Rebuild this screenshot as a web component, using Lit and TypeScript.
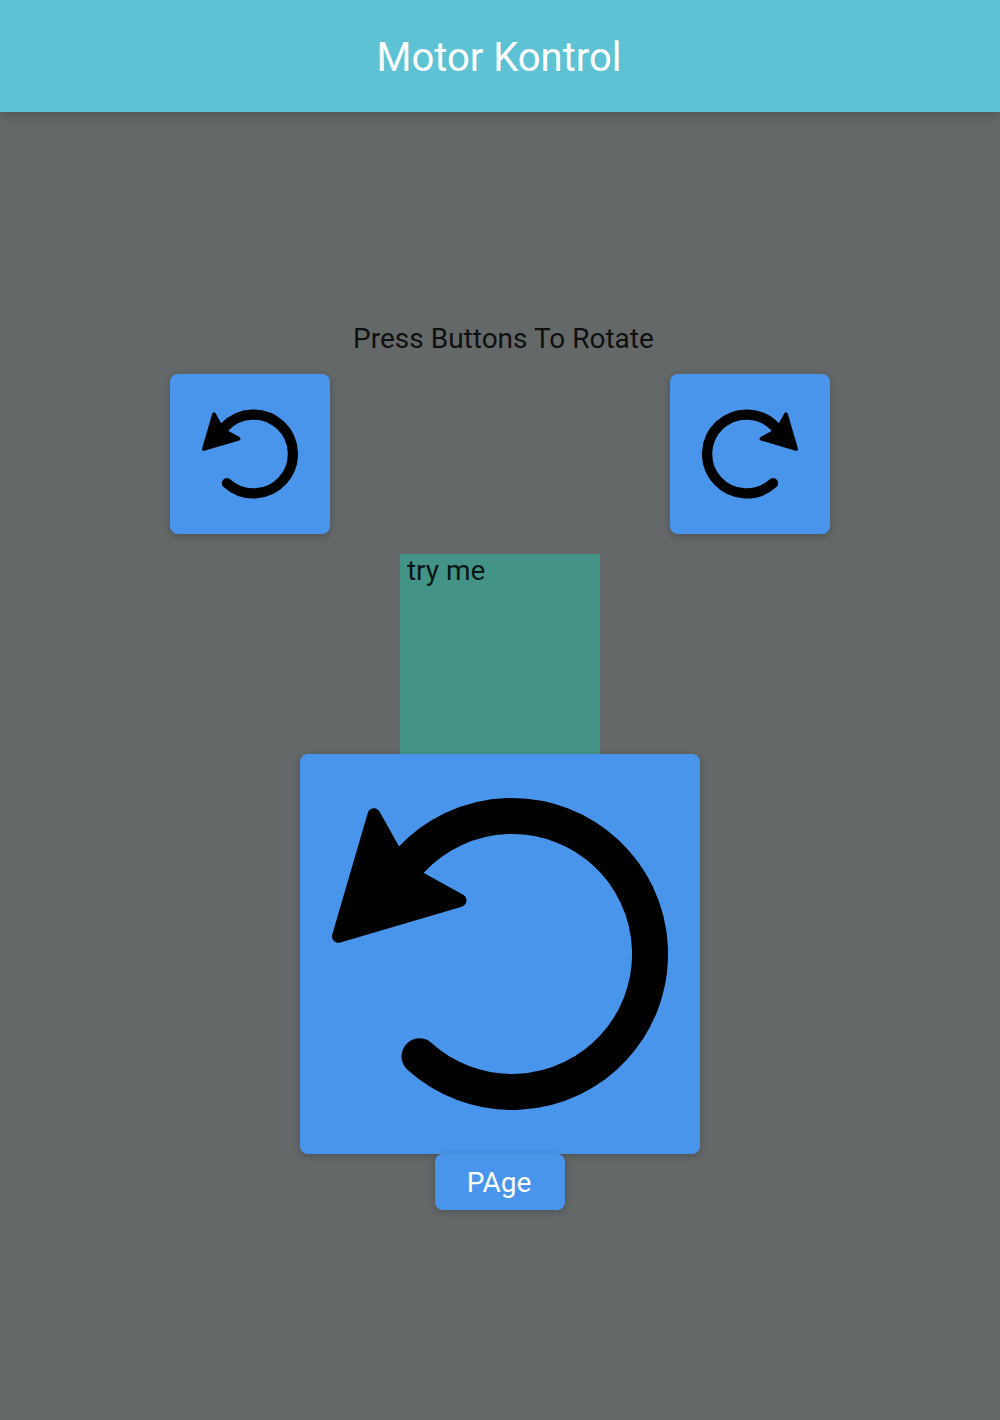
import { LitElement, html, css } from "lit";
import { customElement, property } from "lit/decorators.js";

@customElement("rotate-icon")
class RotateIcon extends LitElement {
  @property({ type: Boolean, reflect: true }) clockwise = false;

  static styles = css`
    :host { display: block; width: 100%; height: 100%; }
    :host([clockwise]) { transform: scaleX(-1); }
    .icon { display: block; width: 100%; height: 100%; }
    .ring { fill: none; stroke: #000; stroke-width: 36; stroke-linecap: round; }
    .head { fill: #000; stroke: #000; stroke-width: 13; stroke-linejoin: round; }
  `;

  render() {
    return html`
      <svg class="icon" viewBox="0 0 336 336" aria-hidden="true">
        <path class="ring" d="M79.6 73.4A138 138 0 1 1 87.5 270.3" />
        <path class="head" d="M42 28.8L6.5 150.3L128 114.5L72.5 83.7Z" />
      </svg>
    `;
  }
}

@customElement("app-root")
class AppRoot extends LitElement {
  static styles = css`
    :host { display: block; }
    .screen {
      display: flex;
      flex-direction: column;
      height: 1420px;
      overflow: hidden;
      background: #646868;
      font-family: Roboto, sans-serif;
      font-size: 28px;
      line-height: 34px;
      color: rgba(0, 0, 0, 0.87);
    }
    .bar {
      flex: none;
      box-sizing: border-box;
      display: flex;
      align-items: center;
      justify-content: center;
      height: 112px;
      padding: 4px 2px 0 0;
      background: #5cc2d4;
      color: #fff;
      font-size: 40px;
      line-height: 48px;
      box-shadow: 0 2px 12px rgba(0, 0, 0, 0.24);
    }
    .title { margin: 0; font: inherit; }
    .body {
      flex: 1;
      display: flex;
      flex-direction: column;
      align-items: center;
      justify-content: center;
    }
    .label { white-space: pre; height: 32px; margin-bottom: 20px; }
    .row {
      display: flex;
      justify-content: space-around;
      width: 100%;
      margin-bottom: 20px;
    }
    .button {
      display: block;
      box-sizing: border-box;
      border: 0;
      border-radius: 8px;
      padding: 32px;
      background: #4995ec;
      color: #fff;
      font: inherit;
      box-shadow: 0 2px 8px rgba(0, 0, 0, 0.22);
    }
    .small { width: 160px; height: 160px; }
    .large { width: 400px; height: 400px; }
    .text { height: 56px; width: 130px; padding: 2px 2px 0 0; }
    .tile { width: 200px; height: 200px; background: #439487; white-space: pre; }
  `;

  render() {
    return html`
      <div class="screen">
        <header class="bar"><h1 class="title">Motor Kontrol</h1></header>
        <main class="body">
          <div class="label">${" Press Buttons To Rotate"}</div>
          <div class="row">
            <button class="button small"><rotate-icon></rotate-icon></button>
            <button class="button small"><rotate-icon clockwise></rotate-icon></button>
          </div>
          <div class="tile">${" try me"}</div>
          <button class="button large"><rotate-icon></rotate-icon></button>
          <button class="button text">PAge</button>
        </main>
      </div>
    `;
  }
}
